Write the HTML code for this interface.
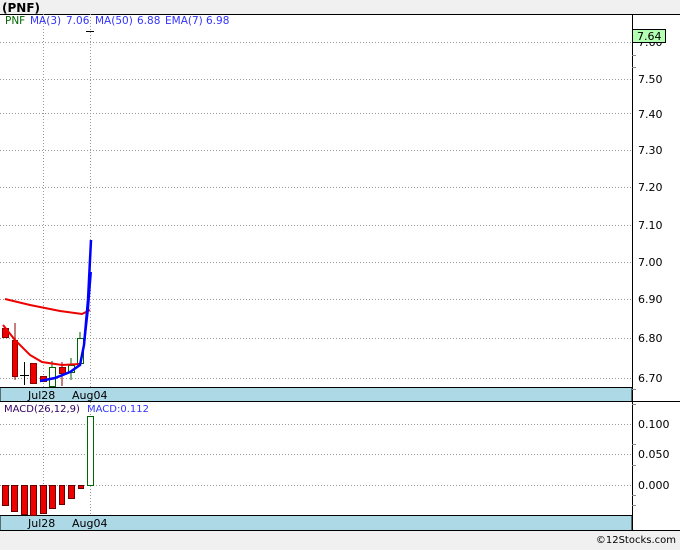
<!DOCTYPE html>
<html><head><style>
body{margin:0;width:680px;height:546px;background:#f0f0f0;overflow:hidden;font-family:"DejaVu Sans","Liberation Sans",sans-serif;}
svg text{font-family:"DejaVu Sans","Liberation Sans",sans-serif;}
</style></head><body>
<svg width="680" height="546" xmlns="http://www.w3.org/2000/svg">
<rect x="0" y="0" width="680" height="546" fill="#f0f0f0"/>
<text x="2" y="12" font-size="12" font-weight="bold" fill="#000">(PNF)</text>
<rect x="0" y="14" width="680" height="517" fill="#fff"/>
<line x1="0" y1="14.5" x2="680" y2="14.5" stroke="#000"/>
<line x1="632.5" y1="14" x2="632.5" y2="531" stroke="#000"/>
<line x1="0" y1="530.5" x2="680" y2="530.5" stroke="#000"/>
<g stroke="#999" stroke-dasharray="1,2">
<line x1="0" y1="42.5" x2="632" y2="42.5"/>
<line x1="0" y1="79.5" x2="632" y2="79.5"/>
<line x1="0" y1="113.5" x2="632" y2="113.5"/>
<line x1="0" y1="150.5" x2="632" y2="150.5"/>
<line x1="0" y1="187.5" x2="632" y2="187.5"/>
<line x1="0" y1="225.5" x2="632" y2="225.5"/>
<line x1="0" y1="262.5" x2="632" y2="262.5"/>
<line x1="0" y1="299.5" x2="632" y2="299.5"/>
<line x1="0" y1="338.5" x2="632" y2="338.5"/>
<line x1="0" y1="378.5" x2="632" y2="378.5"/>
<line x1="43.5" y1="14" x2="43.5" y2="388"/>
<line x1="90.5" y1="14" x2="90.5" y2="388"/>
<line x1="0" y1="424.5" x2="632" y2="424.5"/>
<line x1="0" y1="454.5" x2="632" y2="454.5"/>
<line x1="0" y1="485.5" x2="632" y2="485.5"/>
<line x1="43.5" y1="402" x2="43.5" y2="516"/>
<line x1="90.5" y1="402" x2="90.5" y2="516"/>
</g>
<line x1="86" y1="31.5" x2="94" y2="31.5" stroke="#000"/>
<g font-size="10.5">
<text x="5" y="24" fill="#006600">PNF</text>
<text x="30" y="24" fill="#3333ff">MA(3)</text>
<text x="66" y="24" fill="#3333ff">7.06</text>
<text x="95" y="24" fill="#3333ff">MA(50)</text>
<text x="137" y="24" fill="#3333ff">6.88</text>
<text x="165" y="24" fill="#3333ff">EMA(7)</text>
<text x="206" y="24" fill="#3333ff">6.98</text>
</g>
<g stroke="#000" stroke-width="1">
<line x1="15" y1="323" x2="15" y2="380" stroke="#800"/>
<line x1="24.5" y1="362" x2="24.5" y2="385"/>
<line x1="20" y1="375.5" x2="29" y2="375.5"/>
<line x1="52" y1="361" x2="52" y2="388" stroke="#060"/>
<line x1="62" y1="362" x2="62" y2="386" stroke="#800"/>
<line x1="71" y1="358" x2="71" y2="380" stroke="#060"/>
<line x1="80" y1="332" x2="80" y2="363" stroke="#060"/>
</g>
<g stroke="#800" fill="#e00">
<rect x="2.5" y="328.5" width="6" height="9"/>
<rect x="12.5" y="340.5" width="5" height="36"/>
<rect x="30.5" y="363.5" width="6" height="20"/>
<rect x="40.5" y="376.5" width="6" height="5"/>
<rect x="59.5" y="367.5" width="6" height="6"/>
</g>
<g stroke="#060" fill="#fff">
<rect x="49.5" y="367.5" width="6" height="19"/>
<rect x="68.5" y="365.5" width="6" height="7"/>
<rect x="77.5" y="338.5" width="6" height="25"/>
</g>
<polyline points="5,299 30,305 60,311 82,314 90,310" fill="none" stroke="#e00" stroke-width="2"/>
<polyline points="3,325 15,340 30,355 42,362 62,365 80,364" fill="none" stroke="#e00" stroke-width="2"/>
<polyline points="40,381 55,378 70,372 80,365 84,345 88,300 91,240" fill="none" stroke="#00f" stroke-width="2.5"/>
<polyline points="84,345 88,310 91,272" fill="none" stroke="#00f" stroke-width="2"/>
<rect x="0" y="387.5" width="632" height="14" fill="#add8e6" stroke="#000"/>
<text x="28" y="399" font-size="11" fill="#000">Jul28</text>
<text x="72" y="399" font-size="11" fill="#000">Aug04</text>
<rect x="0" y="515.5" width="632" height="15" fill="#add8e6" stroke="#000"/>
<text x="28" y="527" font-size="11" fill="#000">Jul28</text>
<text x="72" y="527" font-size="11" fill="#000">Aug04</text>
<line x1="632" y1="401.5" x2="680" y2="401.5" stroke="#000"/>
<text x="4" y="412" font-size="10" fill="#330066">MACD(26,12,9)</text>
<text x="87" y="412" font-size="10" fill="#3333ff">MACD:0.112</text>
<g stroke="#600" fill="#e00">
<rect x="2.5" y="485.5" width="6" height="20"/>
<rect x="11.5" y="485.5" width="6" height="26"/>
<rect x="21.5" y="485.5" width="6" height="29"/>
<rect x="30.5" y="485.5" width="6" height="30"/>
<rect x="40.5" y="485.5" width="6" height="28"/>
<rect x="49.5" y="485.5" width="6" height="23"/>
<rect x="59.5" y="485.5" width="5" height="19"/>
<rect x="68.5" y="485.5" width="6" height="13"/>
<rect x="78.5" y="485.5" width="5" height="3"/>
</g>
<rect x="87.5" y="416.5" width="6" height="69" fill="#fff" stroke="#060"/>
<g font-size="11" fill="#000">
<text x="638" y="46">7.60</text>
<text x="638" y="83">7.50</text>
<text x="638" y="118">7.40</text>
<text x="638" y="154">7.30</text>
<text x="638" y="191">7.20</text>
<text x="638" y="229">7.10</text>
<text x="638" y="266">7.00</text>
<text x="638" y="303">6.90</text>
<text x="638" y="342">6.80</text>
<text x="638" y="382">6.70</text>
<text x="638" y="428">0.100</text>
<text x="638" y="458">0.050</text>
<text x="638" y="489">0.000</text>
</g>
<g stroke="#888">
<line x1="632" y1="55.5" x2="636" y2="55.5"/><line x1="632" y1="67.5" x2="636" y2="67.5"/>
<line x1="632" y1="389.5" x2="636" y2="389.5"/><line x1="632" y1="404.5" x2="636" y2="404.5"/>
<line x1="632" y1="444.5" x2="636" y2="444.5"/><line x1="632" y1="465.5" x2="636" y2="465.5"/>
<line x1="632" y1="495.5" x2="636" y2="495.5"/><line x1="632" y1="505.5" x2="636" y2="505.5"/>
</g>
<rect x="632.5" y="29.5" width="33" height="13" fill="#b3ffb3" stroke="#000"/>
<text x="637" y="40" font-size="11" fill="#000">7.64</text>
<text x="676" y="543" font-size="10" fill="#000" text-anchor="end">©12Stocks.com</text>
</svg>
</body></html>
